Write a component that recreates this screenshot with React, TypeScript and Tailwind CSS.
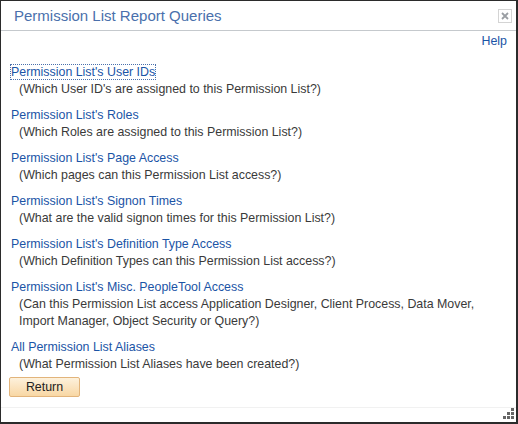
import React from "react";

const queries = [
  { title: "Permission List's User IDs", desc: ["(Which User ID's are assigned to this Permission List?)"] },
  { title: "Permission List's Roles", desc: ["(Which Roles are assigned to this Permission List?)"] },
  { title: "Permission List's Page Access", desc: ["(Which pages can this Permission List access?)"] },
  { title: "Permission List's Signon Times", desc: ["(What are the valid signon times for this Permission List?)"] },
  { title: "Permission List's Definition Type Access", desc: ["(Which Definition Types can this Permission List access?)"] },
  {
    title: "Permission List's Misc. PeopleTool Access",
    desc: [
      "(Can this Permission List access Application Designer, Client Process, Data Mover,",
      "Import Manager, Object Security or Query?)",
    ],
  },
  { title: "All Permission List Aliases", desc: ["(What Permission List Aliases have been created?)"] },
];

export default function App() {
  return (
    <div
      className="w-[518px] h-[424px] bg-white border-l border-t border-r-2 border-b-2 border-[#2b2b2b] flex flex-col overflow-hidden"
      style={{ fontFamily: '"Liberation Sans", Arial, sans-serif' }}
    >
      {/* Header */}
      <div className="h-[30px] shrink-0 border-b border-[#c5c9cd] flex items-center justify-between pl-[13px] pr-[4px]">
        <span className="text-[15px] text-[#4a70ac] leading-none">Permission List Report Queries</span>
        <button className="w-[14px] h-[14px] border border-[#d4d4d4] bg-white flex items-center justify-center mt-[1px]">
          <svg width="8" height="8" viewBox="0 0 8 8">
            <path d="M1 1 L7 7 M7 1 L1 7" stroke="#9a9ea3" strokeWidth="1.8" />
          </svg>
        </button>
      </div>

      {/* Body */}
      <div className="flex-1 min-h-0 flex flex-col px-[8px] text-[12.4px] leading-[17px]">
        <div className="flex justify-end pt-[2px] pr-[1px]">
          <a href="#" className="text-[#1b54a6]">Help</a>
        </div>

        <div className="flex flex-col gap-[9px] mt-[14px] pl-[2px]">
          {queries.map((q, i) => (
            <div key={i} className="flex flex-col">
              <div>
                <a
                  href="#"
                  className={
                    "text-[#1b54a6] " +
                    (i === 0 ? "outline outline-1 outline-dotted outline-[#4a70ac] outline-offset-0" : "")
                  }
                >
                  {q.title}
                </a>
              </div>
              {q.desc.map((d, j) => (
                <div key={j} className="text-[#3a3a3a] pl-[8px]">
                  {d}
                </div>
              ))}
            </div>
          ))}
        </div>

        <div className="mt-[4px]">
          <button className="w-[71px] h-[20px] border border-[#e2b47b] rounded-[2px] bg-gradient-to-b from-[#fdf1dc] to-[#f8d7a4] text-[12.4px] text-[#222] leading-none">
            Return
          </button>
        </div>
      </div>

      {/* Footer / resizer */}
      <div className="h-[15px] shrink-0 border-t border-[#f1f1f1] relative">
        <svg className="absolute right-[2px] bottom-[3px]" width="11" height="11" viewBox="0 0 11 11">
          <rect x="8" y="0" width="3" height="3" fill="#666" />
          <rect x="4" y="4" width="3" height="3" fill="#666" />
          <rect x="8" y="4" width="3" height="3" fill="#666" />
          <rect x="0" y="8" width="3" height="3" fill="#666" />
          <rect x="4" y="8" width="3" height="3" fill="#666" />
          <rect x="8" y="8" width="3" height="3" fill="#666" />
        </svg>
      </div>
    </div>
  );
}
